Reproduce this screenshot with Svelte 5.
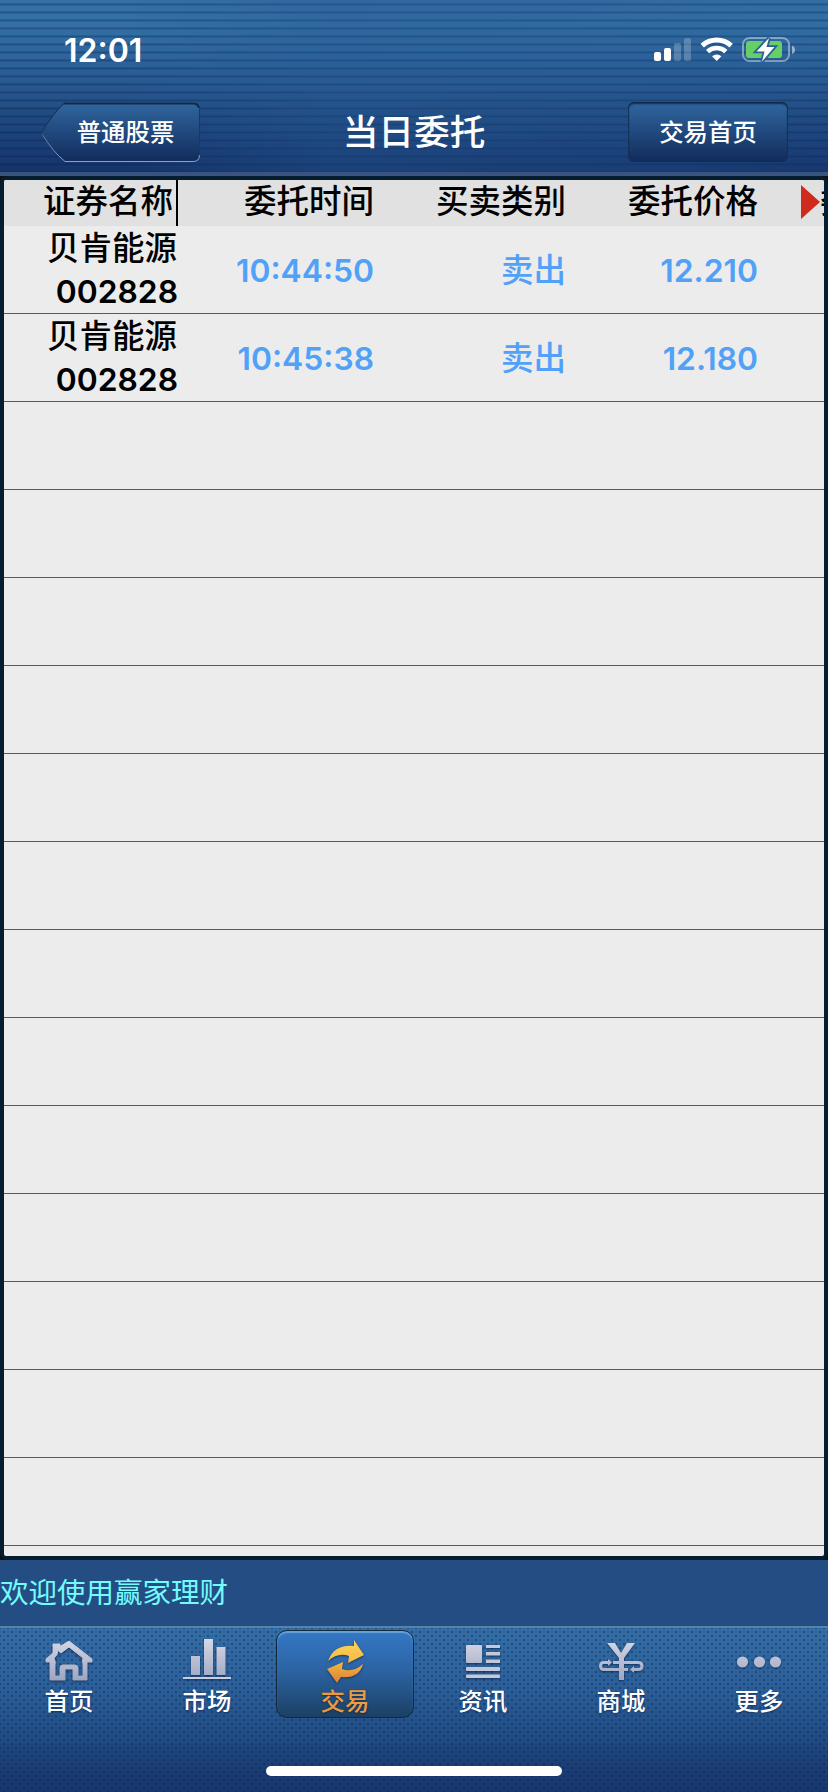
<script>
  const columns = ['证券名称', '委托时间', '买卖类别', '委托价格'];

  const orders = [
    { name: '贝肯能源', code: '002828', time: '10:44:50', side: '卖出', price: '12.210' },
    { name: '贝肯能源', code: '002828', time: '10:45:38', side: '卖出', price: '12.180' }
  ];

  const emptyRows = Array(13).fill(0);

  const tabs = [
    { id: 'home', label: '首页' },
    { id: 'market', label: '市场' },
    { id: 'trade', label: '交易' },
    { id: 'news', label: '资讯' },
    { id: 'mall', label: '商城' },
    { id: 'more', label: '更多' }
  ];

  let active = $state('trade');
</script>

<div class="screen">
  <header>
    <div class="status">
      <span class="clock">12:01</span>
      <svg class="signals" width="144" height="28" viewBox="0 0 144 28">
        <g fill="#fff">
          <rect x="1" y="16" width="7" height="9" rx="2" />
          <rect x="11" y="12" width="7" height="13" rx="2" />
          <rect x="21" y="7" width="7" height="18" rx="2" opacity=".22" />
          <rect x="31" y="2" width="7" height="23" rx="2" opacity=".22" />
        </g>
        <g fill="none" stroke="#fff">
          <path d="M49.2 9.7 A21.6 21.6 0 0 1 78.2 9.7" stroke-width="5" />
          <path d="M54.6 15.6 A13.5 13.5 0 0 1 72.8 15.6" stroke-width="4.6" />
        </g>
        <path d="M59 20.3 Q63.7 16.8 68.4 20.3 L63.7 25 Z" fill="#fff" />
        <rect x="90" y="2" width="46" height="23" rx="6.5" fill="none" stroke="#fff" stroke-opacity=".42" stroke-width="2" />
        <path d="M139 9.500 q3 1.200 3 4.300 t-3 4.300 z" fill="#fff" opacity=".5" />
        <rect x="93" y="5" width="36" height="17" rx="3" fill="#66cf66" />
        <path d="M116 2 L103.500 15.500 H111.500 L109 25.500 L121.500 11 H113.500 Z" fill="#fff" stroke="#2b5f95" stroke-width="3.500" paint-order="stroke" />
      </svg>
    </div>
    <nav>
      <button class="back">
        <svg width="160" height="61" viewBox="0 0 160 61">
          <defs>
            <linearGradient id="backFill" x1="0" y1="0" x2="0" y2="1">
              <stop offset="0" stop-color="#30679f" />
              <stop offset="1" stop-color="#122b5c" />
            </linearGradient>
            <linearGradient id="backEdge" x1="0" y1="0" x2="0" y2="61" gradientUnits="userSpaceOnUse">
              <stop offset="0" stop-color="#0c2440" />
              <stop offset=".5" stop-color="#16345e" />
              <stop offset=".56" stop-color="#5f7ba5" />
              <stop offset="1" stop-color="#8da3c2" />
            </linearGradient>
          </defs>
          <path d="M25 .5 H153 Q159.500 .5 159.500 7 V53 Q159.500 59.500 153 59.500 H25 Q12 49 1.500 31 Q12 12 25 .5 Z" fill="url(#backFill)" />
          <path d="M159.500 7 V53" fill="none" stroke="#1a3866" />
          <path d="M159.500 53 Q159.500 59.500 153 59.500 H25 Q12 49 1.500 31 Q12 12 25 .5" fill="none" stroke="url(#backEdge)" />
          <path d="M24 1.500 H153 Q158 1.500 159 6" fill="none" stroke="#102a48" stroke-width="2" />
        </svg>
        <span>普通股票</span>
      </button>
      <h1>当日委托</h1>
      <button class="trade-home">交易首页</button>
    </nav>
  </header>

  <main>
    <div class="table">
      <div class="row head">
        {#each columns as col}
          <div class="cell">{col}</div>
        {/each}
        <div class="cell next">委托数量</div>
        <svg class="arrow" width="20" height="36" viewBox="0 0 20 36">
          <path d="M1 1 L20 18 L1 35 Z" fill="#cf2a1c" />
        </svg>
      </div>
      {#each orders as o}
        <div class="row">
          <div class="cell stock">
            <span class="name">{o.name}</span>
            <span class="num">{o.code}</span>
          </div>
          <div class="cell num">{o.time}</div>
          <div class="cell side">{o.side}</div>
          <div class="cell num">{o.price}</div>
        </div>
      {/each}
      {#each emptyRows as _}
        <div class="row"></div>
      {/each}
    </div>
  </main>

  <div class="ticker">欢迎使用赢家理财</div>

  <footer>
    <svg class="defs" width="0" height="0">
      <defs>
        <linearGradient id="silver" x1="0" y1="0" x2="0" y2="48" gradientUnits="userSpaceOnUse">
          <stop offset="0" stop-color="#d6d9e6" />
          <stop offset="1" stop-color="#979fbd" />
        </linearGradient>
        <linearGradient id="gold" x1="0" y1="0" x2="0" y2="48" gradientUnits="userSpaceOnUse">
          <stop offset="0" stop-color="#ffd658" />
          <stop offset=".45" stop-color="#f5bc48" />
          <stop offset="1" stop-color="#d9792c" />
        </linearGradient>
      </defs>
    </svg>
    <div class="tabs">
      {#each tabs as tab}
        <button class="tab" class:active={active === tab.id} onclick={() => (active = tab.id)}>
          <svg width="56" height="48" viewBox="0 0 56 48" fill="url(#silver)">
            {#if tab.id === 'home'}
              <path
                fill-rule="evenodd"
                stroke="url(#silver)"
                stroke-linejoin="round"
                d="M28 3 L51 21 V24 H46 V42 H32 V31 H24 V42 H9 V24 H5 V21 L12 15 V6 H19 V8.500 Z M28 9 L20 15 Q18 14 17 12 Q17 17 13 20 Q15 24 14 27 V38 H19 V30 Q19 27 22 27 H34 Q37 27 37 30 V38 H42 V26 Q41 23 42 20 Z"
              />
            {:else if tab.id === 'market'}
              <rect x="12" y="18" width="9" height="19" />
              <rect x="25" y="1" width="9" height="36" />
              <rect x="37.500" y="9" width="9" height="28" />
              <rect x="4" y="39" width="48" height="2" fill="#c9cfdf" />
            {:else if tab.id === 'trade'}
              <path
                fill="url(#gold)"
                d="M11 23 Q17 6 37 8 V2 L47 17 L31 25 L32 18 Q21 14 11 23 Z"
              />
              <path
                fill="url(#gold)"
                d="M46 26 Q42 41 24 39 L20 45 L10 31 L26 24 L25 31 Q36 35 46 26 Z"
              />
            {:else if tab.id === 'news'}
              <rect x="11" y="7" width="16" height="18" rx="1" />
              <g fill="#c3c9da">
                <rect x="31" y="7" width="14" height="3" />
                <rect x="31" y="14" width="14" height="3.500" />
                <rect x="31" y="21.500" width="14" height="3.500" />
                <rect x="11" y="29" width="34" height="4" rx="1" />
                <rect x="11" y="36.500" width="34" height="3.500" rx="1" />
              </g>
            {:else if tab.id === 'mall'}
              <path d="M14 5 H22 L28 15 L34 5 H42 L31 20 V42 H26 V20 Z" />
              <path
                d="M20 24.500 H45 Q49 24.500 49 28 T45 31.500 H39 M35 31.500 H11 Q7.500 31.500 7.500 28 T11 24.500 H16"
                fill="none"
                stroke="url(#silver)"
                stroke-width="3"
              />
              <path d="M15 21 L19 24.500 L15 28 Z M41 28 L37 31.500 L41 35 Z" />
            {:else}
              <circle cx="11.500" cy="24" r="5.600" />
              <circle cx="28.500" cy="24" r="5.600" />
              <circle cx="44.500" cy="24" r="5.600" />
            {/if}
          </svg>
          <span>{tab.label}</span>
        </button>
      {/each}
    </div>
    <div class="indicator"></div>
  </footer>
</div>

<style>
  :global(body) {
    margin: 0;
    background: #14100f;
  }

  .screen {
    width: 828px;
    height: 1792px;
    display: flex;
    flex-direction: column;
    overflow: hidden;
    font-family: Inter, 'Noto Sans CJK SC', sans-serif;
    font-weight: 500;
  }

  button {
    border: 0;
    padding: 0;
    background: none;
    color: #fff;
    font: inherit;
  }

  header {
    box-sizing: border-box;
    height: 176px;
    border-bottom: 4px solid #38547f;
    background:
      linear-gradient(90deg, transparent 15%, rgba(38, 90, 148, 0.35) 40%, rgba(38, 90, 148, 0.25) 75%, rgba(38, 90, 148, 0.1)),
      repeating-linear-gradient(
        rgba(8, 30, 80, 0) 0 3px,
        rgba(8, 28, 72, 0.34) 4px 5px,
        rgba(8, 30, 80, 0.14) 5px 6px,
        rgba(8, 30, 80, 0) 6px 8px
      ),
      linear-gradient(#346fa6 0, #3270a5 14%, #2c639b 35%, #27568f 52%, #204c82 65%, #1b417a 80%, #15336a 100%);
  }

  .status {
    display: flex;
    justify-content: space-between;
    padding: 36px 31px 0 64px;
    height: 66px;
    box-sizing: border-box;
  }

  .clock {
    color: #fff;
    font-size: 32px;
    line-height: 29px;
    font-weight: 600;
  }

  nav {
    display: flex;
    justify-content: space-between;
    align-items: flex-start;
    padding: 36px 40px 0;
  }

  .back {
    position: relative;
    width: 160px;
    height: 61px;
  }

  .back svg {
    position: absolute;
    left: 0;
    top: 0;
  }

  .back span {
    position: relative;
    display: block;
    padding-left: 11px;
    font-size: 24.4px;
    line-height: 61px;
  }

  h1 {
    margin: 0;
    color: #fff;
    font-size: 35.7px;
    line-height: 60px;
    font-weight: 500;
  }

  .trade-home {
    width: 160px;
    height: 60px;
    border-radius: 6px;
    font-size: 24.4px;
    line-height: 61px;
    background: linear-gradient(#30679f, #122b5c);
    box-shadow:
      inset 0 2px 2px #102a48,
      inset 1px 0 1px #16345e,
      inset -1px 0 1px #16345e;
  }

  main {
    box-sizing: border-box;
    height: 1384px;
    padding: 4px;
    border-radius: 8px;
    background: #051d30;
  }

  .table {
    height: 1376px;
    border-radius: 2px;
    overflow: hidden;
    background: #ececec;
    font-size: 32.5px;
  }

  .row {
    box-sizing: border-box;
    height: 88px;
    display: grid;
    grid-template-columns: 174px 196px 192px 192px 1fr;
    align-items: center;
    border-bottom: 1px solid #2f658f;
    color: #51a1f8;
    text-align: right;
    white-space: nowrap;
  }

  .head {
    position: relative;
    height: 46px;
    border: 0;
    background: #e1e1e1;
    color: #000;
    line-height: 43px;
  }

  .head .cell:first-child {
    box-sizing: border-box;
    height: 46px;
    padding-right: 3px;
    border-right: 2px solid #000;
  }

  .head .cell {
    height: 46px;
  }

  .next {
    padding-left: 62px;
  }

  .arrow {
    position: absolute;
    left: 796px;
    top: 4px;
  }

  .num {
    font-size: 31.8px;
    font-weight: 600;
  }

  .side {
    line-height: 44px;
    padding-top: 2px;
  }

  .stock {
    color: #000;
  }

  .stock span {
    display: block;
    line-height: 44px;
  }

  .stock .name {
    padding-right: 1px;
    line-height: 45px;
    margin-bottom: -1px;
  }

  .ticker {
    height: 66px;
    background: #244d84;
    color: #73fbfd;
    font-size: 28.5px;
    line-height: 66px;
    font-weight: 400;
  }

  footer {
    box-sizing: border-box;
    height: 166px;
    border-top: 2px solid #5583aa;
    background:
      radial-gradient(circle, rgba(8, 30, 75, 0.26) 0 1px, transparent 2px) 0 0 / 8px 8px,
      radial-gradient(circle, rgba(8, 30, 75, 0.26) 0 1px, transparent 2px) 4px 4px / 8px 8px,
      radial-gradient(circle, rgba(8, 30, 75, 0.15) 0 1px, transparent 1.5px) 2px 2px / 4px 4px,
      linear-gradient(#3571a8 0, #2d629c 35%, #24528b 60%, #1b3e76 85%, #17386e 100%);
  }

  .defs {
    position: absolute;
  }

  .tabs {
    display: grid;
    grid-template-columns: repeat(6, 138px);
    height: 138px;
  }

  .tab {
    box-sizing: border-box;
    width: 138px;
    height: 88px;
    margin-top: 2px;
    display: flex;
    flex-direction: column;
    align-items: center;
    padding-top: 8px;
    font-size: 24.4px;
    line-height: 30px;
  }

  .tab svg {
    filter: drop-shadow(0 1px 1px rgba(5, 20, 50, 0.6));
    flex: none;
  }

  .tab span {
    text-shadow: 0 1px 2px rgba(5, 20, 50, 0.5);
  }

  .active {
    border-radius: 11px;
    border: 1px solid #14283e;
    background: linear-gradient(#3477c4, #2c64a4 45%, #1b4064);
    box-shadow: inset 0 2px 1px #66a3d8;
    color: #eb9a3c;
    padding-top: 7px;
  }

  .indicator {
    width: 296px;
    height: 10px;
    margin: 0 auto;
    border-radius: 5px;
    background: #fff;
  }
</style>
